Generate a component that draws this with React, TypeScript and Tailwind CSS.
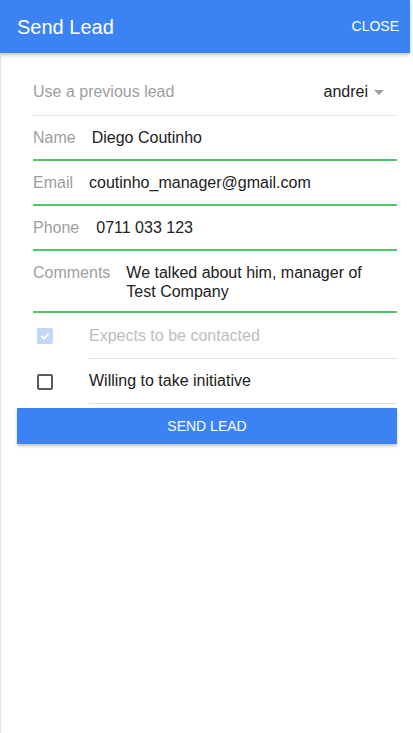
import React from "react";

function Field({ label, value, gap = 16 }: { label: string; value: string; gap?: number }) {
  return (
    <div className="flex h-[45px] items-center border-b-2 border-[#4cc764]">
      <span className="text-[16px] text-[#9e9e9e]">{label}</span>
      <span className="text-[16px] text-[#212121]" style={{ marginLeft: gap }}>{value}</span>
    </div>
  );
}

export default function App() {
  return (
    <div className="w-[413px] h-[733px] bg-white" style={{ fontFamily: '"Liberation Sans", Arial, sans-serif' }}>
      <div className="relative w-[410px] h-full flex flex-col">
        <div className="relative z-10 h-[53px] bg-[#3b82f5] flex items-center justify-between pl-[17px] pr-[11px] shadow-[0_2px_4px_rgba(0,0,0,0.25)]">
          <span className="text-white text-[20px]">Send Lead</span>
          <span className="text-white text-[14px]">CLOSE</span>
        </div>
        <div className="flex-1 border-l border-[#e4e4e4] pt-[16px]">
          <div className="pl-[32px] pr-[13px]">
            <div className="flex h-[47px] items-center justify-between border-b border-[#e0e0e0]">
              <span className="text-[16px] text-[#9e9e9e]">Use a previous lead</span>
              <div className="flex items-center">
                <span className="text-[16px] text-[#212121]">andrei</span>
                <svg width="10" height="5" viewBox="0 0 10 5" className="ml-[6px] mr-[13px]">
                  <path d="M0 0 L10 0 L5 5 Z" fill="#9e9e9e" />
                </svg>
              </div>
            </div>
            <Field label="Name" value="Diego Coutinho" gap={16} />
            <Field label="Email" value="coutinho_manager@gmail.com" gap={16} />
            <Field label="Phone" value="0711 033 123" gap={17} />
            <div className="flex pt-[12px] pb-[10px] border-b-2 border-[#4cc764] text-[16px] leading-[19px]">
              <span className="text-[#9e9e9e]">Comments</span>
              <span className="ml-[16px] text-[#212121]">We talked about him, manager of<br />Test Company</span>
            </div>
            <div className="flex h-[46px]">
              <div className="w-[56px] flex items-center pl-[4px]">
                <div className="w-[16px] h-[16px] rounded-[2px] bg-[#c4d7f7] flex items-center justify-center">
                  <svg width="12" height="12" viewBox="0 0 12 12">
                    <path d="M2.5 6.2 L5 8.6 L9.7 3.6" stroke="white" strokeWidth="1.8" fill="none" />
                  </svg>
                </div>
              </div>
              <div className="flex-1 flex items-center border-b border-[#e0e0e0] text-[16px] text-[#bdbdbd]">
                Expects to be contacted
              </div>
            </div>
            <div className="flex h-[45px]">
              <div className="w-[56px] flex items-center pl-[4px]">
                <div className="w-[16px] h-[16px] rounded-[2px] border-2 border-[#5a5a5a]" />
              </div>
              <div className="flex-1 flex items-center border-b border-[#e0e0e0] text-[16px] text-[#212121]">
                Willing to take initiative
              </div>
            </div>
          </div>
          <div className="ml-[16px] mr-[13px] mt-[4px] h-[36px] bg-[#3b82f5] flex items-center justify-center text-white text-[14px] shadow-[0_2px_3px_rgba(0,0,0,0.25)]">
            SEND LEAD
          </div>
        </div>
      </div>
    </div>
  );
}
